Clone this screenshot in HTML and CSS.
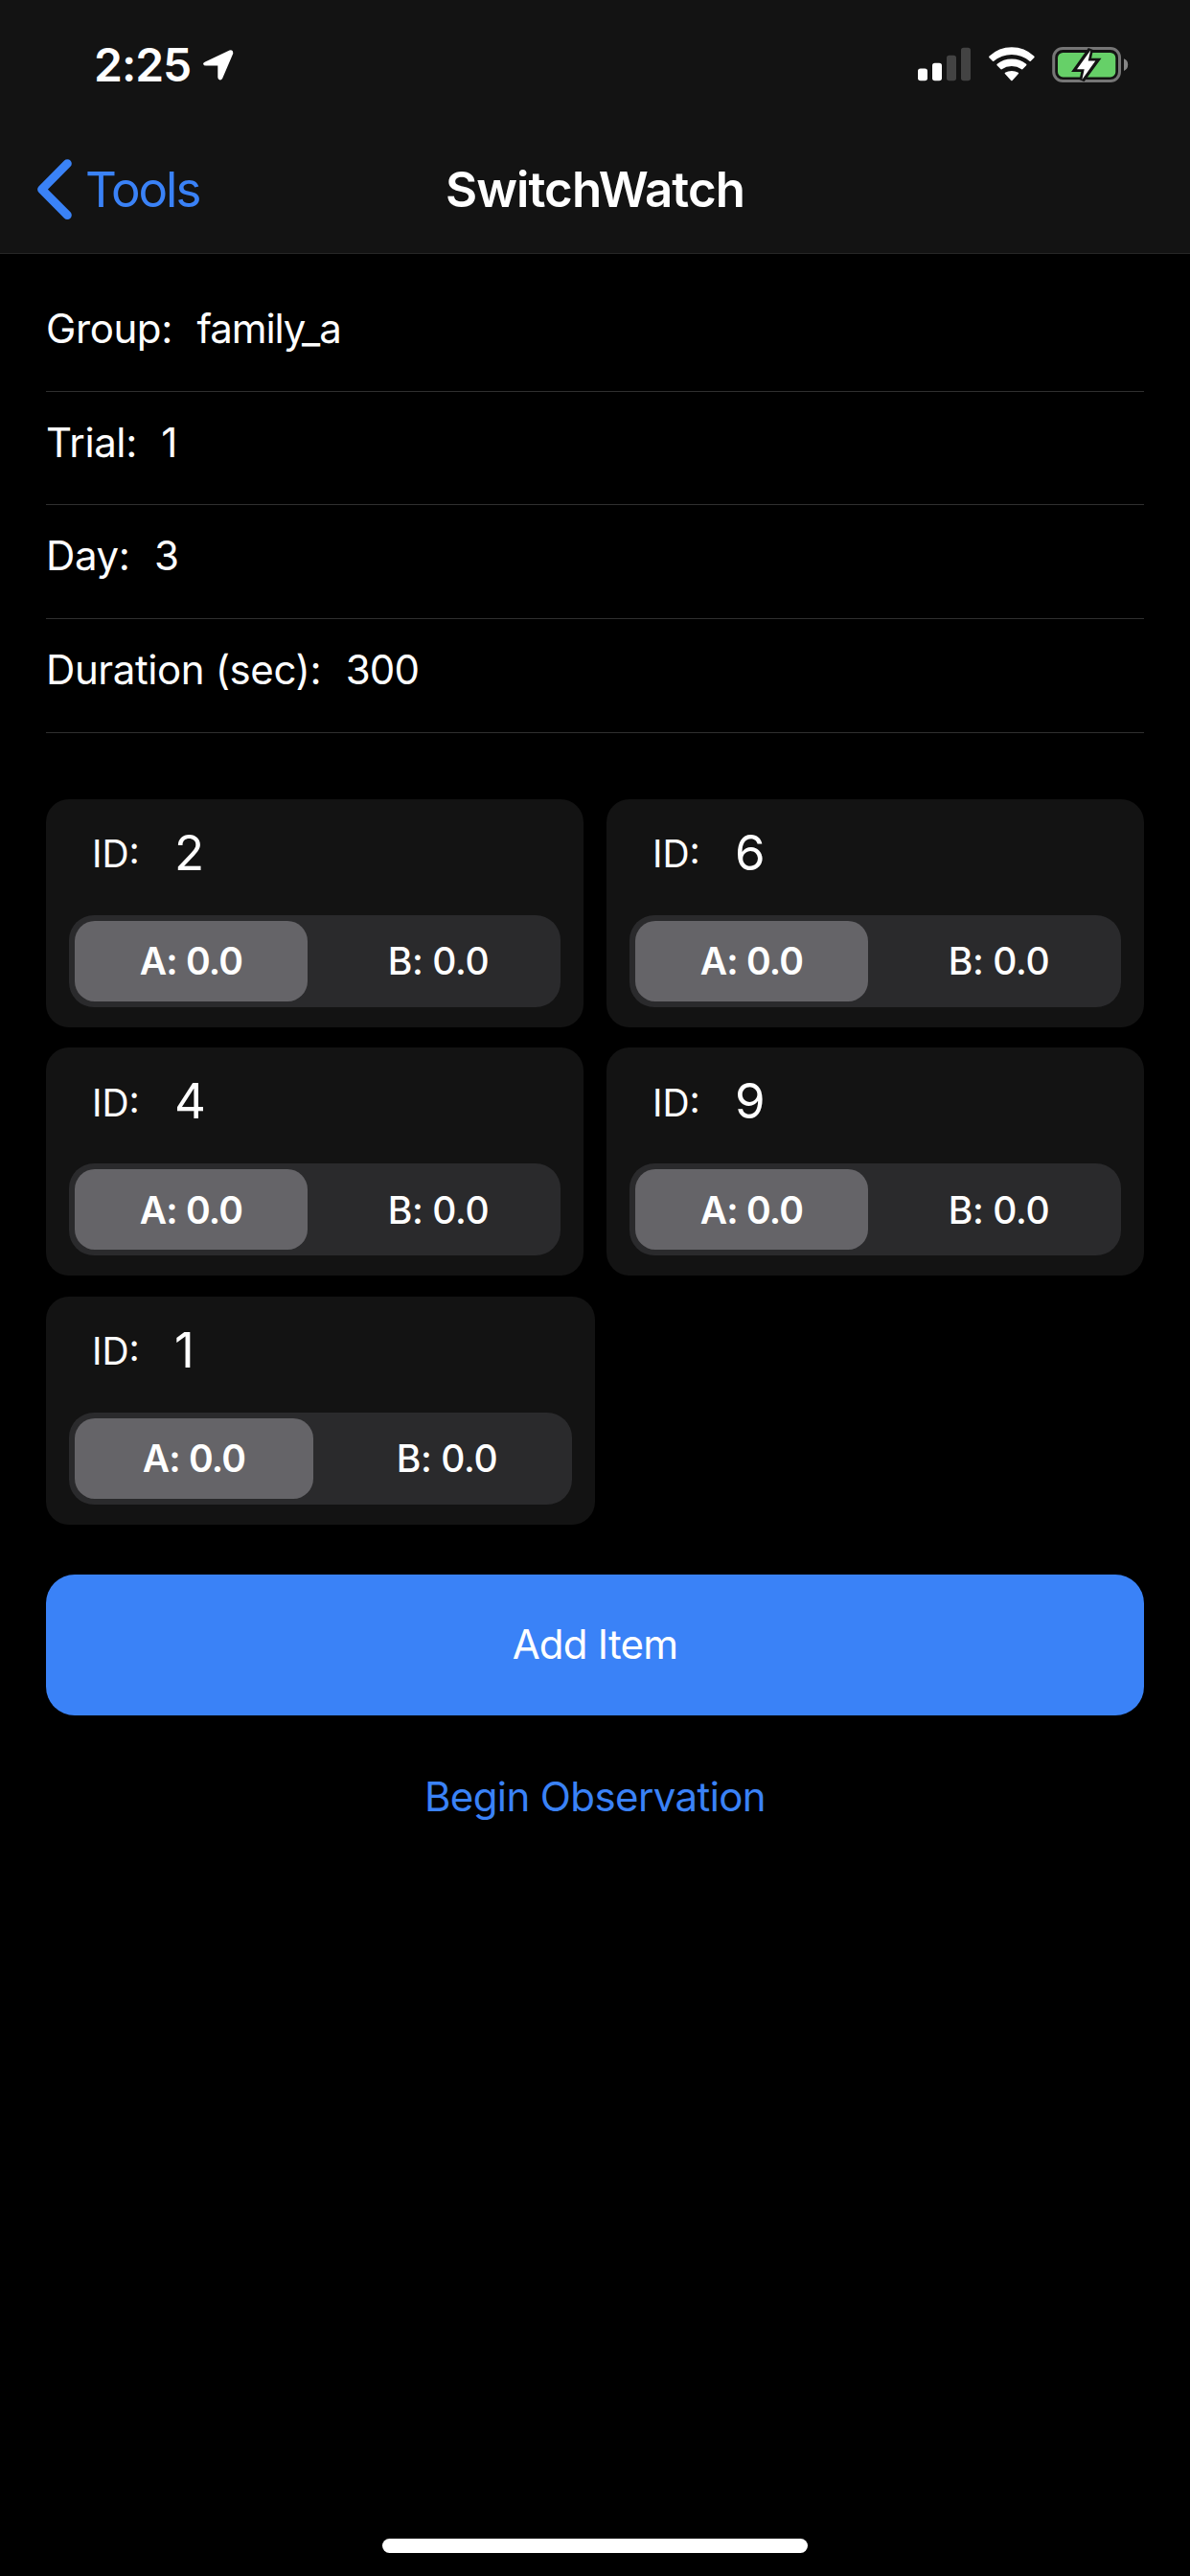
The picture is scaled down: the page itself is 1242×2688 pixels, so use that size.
FILE: index.html
```html
<!DOCTYPE html>
<html lang="en">
<head>
<meta charset="utf-8">
<title>SwitchWatch</title>
<link rel="stylesheet" href="styles.css">
</head>
<body>
<div class="screen">
  <header class="header">
    <div class="status">
      <div class="status-left">
        <span class="time">2:25</span>
        <svg class="location" width="32" height="32" viewBox="0 0 32 32"><path d="M2.2 12.6 L27.5 .6 Q31.8-.6 31.2 4 L20.2 29.7 Q19.3 31.6 17.5 31.4 Q15.4 31.1 15.3 28.8 V16.6 H3 Q.4 16.5.1 14.7 Q0 13.4 2.2 12.6Z" fill="#fff"/></svg>
      </div>
      <div class="status-right">
        <svg width="56" height="36" viewBox="0 0 56 36"><rect y="22.5" width="10" height="12.8" rx="2.8" fill="#fff"/><rect x="15" y="16.7" width="10" height="18.6" rx="2.8" fill="#fff"/><rect x="30" y="8.7" width="10" height="26.6" rx="2.8" fill="#434343"/><rect x="45" y=".8" width="10" height="34.5" rx="2.8" fill="#434343"/></svg>
        <svg width="48" height="37" viewBox="0 0 48 37"><g fill="#fff"><path d="M.5 11.2 Q-.3 10.3.6 9.5 Q10.5.3 23.9.3 T47.2 9.5 Q48.1 10.3 47.3 11.2 L43.8 14.7 Q43.2 15.3 42.5 14.7 Q34.5 7.9 23.9 7.9 T5.3 14.7 Q4.6 15.3 4 14.7Z"/><path d="M8.6 19.3 Q7.9 18.5 8.7 17.8 Q15.2 12.6 23.9 12.6 T39.1 17.8 Q39.9 18.5 39.2 19.3 L35.5 23.1 Q34.9 23.7 34.2 23.2 Q29.6 20.1 23.9 20.1 T13.6 23.2 Q12.9 23.7 12.3 23.1Z"/><path d="M16.9 28.1 Q16.2 27.4 17 26.8 Q20 25 23.9 25 T30.8 26.8 Q31.6 27.4 30.9 28.1 L24.6 35 Q23.9 35.7 23.2 35Z"/></g></svg>
        <svg width="80" height="38" viewBox="0 0 80 38"><rect x="1.7" y="1.5" width="68.8" height="34" rx="9.5" fill="none" stroke="#767676" stroke-width="3"/><rect x="6" y="6" width="60.3" height="25.4" rx="5.5" fill="#66d068"/><path d="M75 12.3 Q79.2 13.8 79.2 18.5 T75 24.9Z" fill="#868686"/><path d="M40.2 2.5 L25.5 23.3 H33.7 L31.3 34.5 L46 14.5 H37.7Z" fill="#fff" stroke="#131313" stroke-width="5.6"/><path d="M40.2 3.6 L26 23.3 H33.7 L31.4 34 L45.3 14.5 H37.7Z" fill="#fff"/></svg>
      </div>
    </div>
    <nav class="nav">
      <a class="back"><svg width="38" height="64" viewBox="0 0 38 64"><path d="M32.3 4.7 L5.6 31.6 L32.3 58.5" fill="none" stroke="#3a82f7" stroke-width="9" stroke-linecap="round" stroke-linejoin="round"/></svg><span class="back-label">Tools</span></a>
      <h1 class="title">SwitchWatch</h1>
    </nav>
  </header>

  <main class="content">
    <dl class="fields">
      <div class="field"><dt>Group:</dt><dd class="word">family_a</dd></div>
      <div class="field"><dt>Trial:</dt><dd>1</dd></div>
      <div class="field"><dt>Day:</dt><dd>3</dd></div>
      <div class="field"><dt>Duration (sec):</dt><dd>300</dd></div>
    </dl>

    <section class="items">
      <div class="row">
        <article class="card"><div class="id"><span class="id-label">ID:</span><span class="id-value">2</span></div><div class="segments"><span class="segment selected">A: 0.0</span><span class="segment">B: 0.0</span></div></article>
        <article class="card"><div class="id"><span class="id-label">ID:</span><span class="id-value">6</span></div><div class="segments"><span class="segment selected">A: 0.0</span><span class="segment">B: 0.0</span></div></article>
      </div>
      <div class="row">
        <article class="card"><div class="id"><span class="id-label">ID:</span><span class="id-value">4</span></div><div class="segments"><span class="segment selected">A: 0.0</span><span class="segment">B: 0.0</span></div></article>
        <article class="card"><div class="id"><span class="id-label">ID:</span><span class="id-value">9</span></div><div class="segments"><span class="segment selected">A: 0.0</span><span class="segment">B: 0.0</span></div></article>
      </div>
      <div class="row row-last">
        <article class="card"><div class="id"><span class="id-label">ID:</span><span class="id-value">1</span></div><div class="segments"><span class="segment selected">A: 0.0</span><span class="segment">B: 0.0</span></div></article>
      </div>
    </section>

    <button class="add">Add Item</button>
    <button class="begin">Begin Observation</button>
  </main>
  <div class="home-indicator"></div>
</div>
</body>
</html>
```
FILE: styles.css
```css
* { box-sizing: border-box; margin: 0; padding: 0; }
body { background: #000; color: #fff; font-family: Inter, "Liberation Sans", sans-serif; }
svg { display: block; flex: none; }

.screen { display: flex; flex-direction: column; width: 1242px; height: 2688px; }

.header { height: 265px; background: #131313; border-bottom: 1px solid #262626; }
.status { display: flex; justify-content: space-between; height: 132px; padding: 38px 64px 0 98px; }
.status-left { display: flex; align-items: flex-start; }
.time { font-size: 48px; line-height: 60px; font-weight: 600; letter-spacing: -1px; }
.location { margin: 14px 0 0 13px; }
.status-right { display: flex; gap: 18px; padding-top: 11px; }

.nav { display: grid; grid-template-columns: 1fr auto 1fr; height: 132px; padding: 0 38px; align-items: center; }
.back { display: flex; align-items: center; color: #3a82f7; }
.back-label { margin-left: 13px; font-size: 51px; line-height: 60px; letter-spacing: -2px; }
.title { font-size: 51px; line-height: 60px; font-weight: 600; letter-spacing: -.9px; }

.content { display: flex; flex-direction: column; flex: 1; padding: 25px 48px 0; }
.field { display: flex; gap: 25.5px; height: 118.67px; padding-top: 27px; border-bottom: 1px solid #2f2f2f; font-size: 42px; line-height: 52px; letter-spacing: -.4px; }
.field dd { letter-spacing: -.8px; }
.field .word { letter-spacing: -1.07px; }

.items { display: flex; flex-direction: column; gap: 21.5px; margin-top: 69px; }
.row { display: grid; grid-template-columns: 1fr 1fr; gap: 24px; }
.row-last { gap: 0; }
.card { height: 238px; padding: 30px 24px 21px; border-radius: 24px; background: #131313; }
.id { display: flex; align-items: center; height: 52px; margin-bottom: 39px; padding-left: 24px; line-height: 52px; }
.id-label { width: 86px; padding-top: 3px; font-size: 39px; }
.id-value { font-size: 51px; }
.segments { display: flex; gap: 15px; height: 96px; padding: 6px; border-radius: 26px; background: #2a2a2c; }
.segment { display: flex; flex: 1 1 0; align-items: center; justify-content: center; border-radius: 21px; font-size: 39px; font-weight: 500; letter-spacing: -.4px; }
.selected { background: #656468; font-weight: 600; letter-spacing: -.8px; }

button { border: 0; background: none; font-family: inherit; font-size: 42px; letter-spacing: -.6px; }
.add { height: 147px; margin-top: 52px; padding-bottom: 2px; border-radius: 30px; background: #3a82f7; color: #fff; letter-spacing: -.75px; }
.begin { height: 60px; margin-top: 55px; color: #3a82f7; }

.home-indicator { width: 444px; height: 15px; margin: 0 auto 24px; border-radius: 8px; background: #fff; }
```
